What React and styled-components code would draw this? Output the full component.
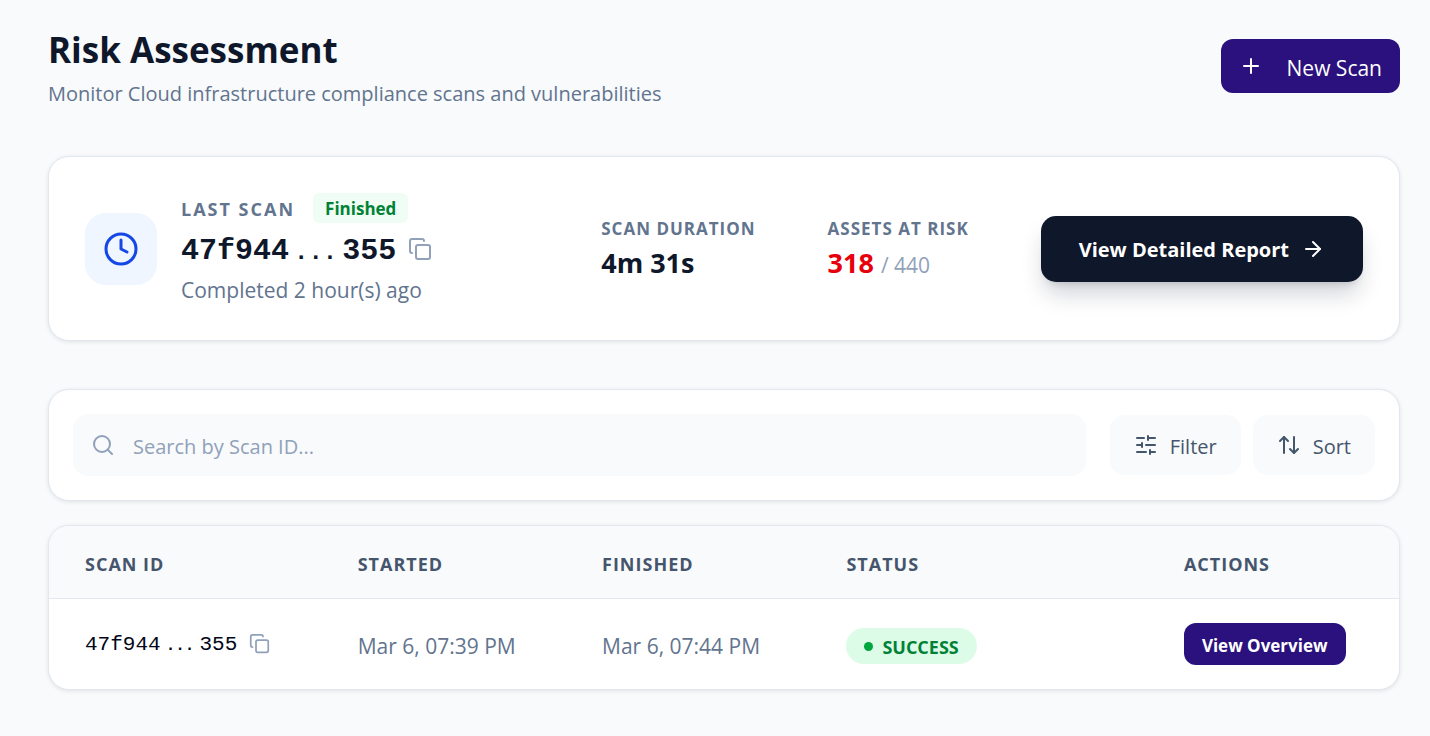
/* eslint-disable react/prop-types */
import React from "react";
import styled, { createGlobalStyle } from "styled-components";
import {
  ArrowRight,
  ArrowUpDown,
  Clock,
  Copy,
  Plus,
  Search,
  SlidersHorizontal,
} from "lucide-react";

const GlobalStyle = createGlobalStyle`
  :root {
    --navy: #0f172b;
    --indigo: #2a117d;
    --slate: #62748e;
    --slate-dark: #45556c;
    --slate-light: #90a1b9;
    --border: #e2e8f0;
    --soft: #f8fafc;
    --green: #008236;
  }

  * {
    box-sizing: border-box;
  }

  body {
    margin: 0;
    background: var(--soft);
    color: var(--navy);
    font-family: "Open Sans", "Noto Sans", sans-serif;
    font-size: 20px;
    line-height: 30px;
  }

  button,
  input {
    font: inherit;
  }

  button {
    border: 0;
    cursor: pointer;
    white-space: nowrap;
  }
`;

const Page = styled.main`
  display: flex;
  flex-direction: column;
  padding: 24px 30px 46px 48px;
`;

const Header = styled.header`
  display: flex;
  align-items: center;
  justify-content: space-between;
  margin-bottom: 48px;
`;

const Title = styled.h1`
  margin: 0;
  font-size: 35px;
  font-weight: 700;
  line-height: 52px;
`;

const Subtitle = styled.p`
  margin: 4px 0 0;
  color: var(--slate);
  line-height: 28px;
`;

const NewScanButton = styled.button`
  display: flex;
  align-items: center;
  gap: 24px;
  height: 54px;
  padding: 0 18px;
  border-radius: 12px;
  background: var(--indigo);
  color: white;
  font-size: 21px;
`;

const ButtonText = styled.span`
  padding-top: 3px;
`;

const Card = styled.section`
  border: 1px solid var(--border);
  border-radius: 21px;
  background: white;
  box-shadow: 0 1px 4px rgba(0, 0, 0, 0.1);
`;

const LastScanCard = styled(Card)`
  display: flex;
  align-items: center;
  justify-content: space-between;
  margin-bottom: 48px;
  padding: 36px;
`;

const LastScan = styled.div`
  display: flex;
  align-items: center;
  gap: 24px;
  flex: 1;
`;

const ClockTile = styled.div`
  display: grid;
  place-items: center;
  width: 72px;
  height: 72px;
  border-radius: 21px;
  background: #eff6ff;
  color: #1447e6;
`;

const LabelRow = styled.div`
  display: flex;
  align-items: center;
  gap: 18px;
`;

const Label = styled.span`
  display: block;
  color: var(--slate);
  font-size: 17px;
  font-weight: 700;
  line-height: 28px;
  letter-spacing: 1px;
`;

const WideLabel = styled(Label)`
  padding-top: 2px;
  font-size: 18px;
  letter-spacing: 2px;
`;

const FinishedBadge = styled.span`
  padding: 2px 12px 0;
  border-radius: 6px;
  background: #f0fdf4;
  color: var(--green);
  font-size: 17px;
  font-weight: 700;
  line-height: 28px;
`;

const ScanIdRow = styled.div`
  display: flex;
  align-items: center;
  gap: 12px;
`;

const Code = styled.span`
  display: flex;
  align-items: baseline;
  padding-top: ${({ $large }) => ($large ? "6px" : "2px")};
  font-family: "Liberation Mono", monospace;
  font-size: ${({ $large }) => ($large ? "30px" : "21px")};
  font-weight: ${({ $large }) => ($large ? 700 : 400)};
  line-height: ${({ $large }) => ($large ? "45px" : "28px")};
`;

const Dots = styled.span`
  padding: 0 5px;
  font-size: ${({ $large }) => ($large ? "24px" : "16px")};
  font-weight: 700;
  line-height: 1;
`;

const CopyButton = styled.button`
  display: flex;
  padding: 0;
  background: none;
  color: var(--slate-light);
`;

const Completed = styled.p`
  margin: 0;
  padding-top: 2px;
  color: var(--slate);
  font-size: 21px;
  line-height: 28px;
`;

const Stats = styled.dl`
  display: flex;
  gap: 72px;
  margin: 0 72px 0 0;
  padding-top: 3px;
`;

const StatValue = styled.dd`
  margin: 0;
  font-size: 27px;
  font-weight: 700;
  line-height: 40px;
`;

const Risk = styled.span`
  color: #e7000b;
`;

const Total = styled.span`
  color: var(--slate-light);
  font-size: 21px;
  font-weight: 400;
`;

const ReportButton = styled.button`
  display: flex;
  align-items: center;
  gap: 12px;
  height: 66px;
  padding: 0 38px;
  border-radius: 15px;
  background: var(--navy);
  color: white;
  font-weight: 700;
  box-shadow: 0 15px 23px -4px rgba(15, 23, 43, 0.2),
    0 6px 9px -6px rgba(15, 23, 43, 0.2);
`;

const Toolbar = styled(Card)`
  display: flex;
  align-items: center;
  gap: 12px;
  margin-bottom: 24px;
  padding: 24px;
`;

const SearchBox = styled.label`
  display: flex;
  align-items: center;
  flex: 1;
  gap: 18px;
  height: 62px;
  margin-right: 12px;
  padding: 0 18px;
  border-radius: 15px;
  background: var(--soft);
  color: var(--slate-light);
`;

const SearchInput = styled.input`
  flex: 1;
  min-width: 0;
  padding: 3px 0 0;
  border: 0;
  outline: 0;
  background: none;
  color: var(--navy);

  &::placeholder {
    color: var(--slate-light);
    opacity: 1;
  }
`;

const ToolButton = styled.button`
  display: flex;
  align-items: center;
  gap: 12px;
  height: 60px;
  padding: 0 24px;
  border-radius: 15px;
  background: var(--soft);
  color: var(--slate-dark);
`;

const TableCard = styled(Card)`
  overflow: hidden;
`;

const Table = styled.table`
  width: 100%;
  border-collapse: collapse;
  table-layout: fixed;
`;

const Th = styled.th`
  width: ${({ $width }) => $width};
  height: 72px;
  padding: 4px 36px 0;
  border-bottom: 1px solid var(--border);
  background: var(--soft);
  color: var(--slate-dark);
  font-size: 18px;
  font-weight: 700;
  letter-spacing: 1px;
  text-align: left;
`;

const Td = styled.td`
  height: 91px;
  padding: 4px 36px 0;
  color: var(--slate);
  font-size: 21px;
  white-space: nowrap;
`;

const ControlCell = styled(Td)`
  padding-top: 0;
  color: #020618;
`;

const StatusPill = styled.span`
  display: flex;
  align-items: center;
  gap: 9px;
  width: fit-content;
  height: 36px;
  padding: 2px 18px 0;
  border-radius: 18px;
  background: #dcfce7;
  color: var(--green);
  font-size: 18px;
  font-weight: 700;

  &::before {
    content: "";
    width: 9px;
    height: 9px;
    border-radius: 50%;
    background: #00a63e;
  }
`;

const OverviewButton = styled.button`
  display: block;
  height: 42px;
  padding: 4px 18px 0;
  border-radius: 12px;
  background: var(--indigo);
  color: white;
  font-size: 17px;
  font-weight: 700;
`;

const columns = [
  { name: "SCAN ID", width: "20.2%" },
  { name: "STARTED", width: "18.1%" },
  { name: "FINISHED", width: "18.1%" },
  { name: "STATUS", width: "25%" },
  { name: "ACTIONS", width: "18.6%" },
];

const scans = [
  {
    head: "47f944",
    tail: "355",
    started: "Mar 6, 07:39 PM",
    finished: "Mar 6, 07:44 PM",
    status: "SUCCESS",
  },
];

const ScanId = ({ head, tail, large }) => (
  <ScanIdRow>
    <Code $large={large}>
      {head}
      <Dots $large={large}>...</Dots>
      {tail}
    </Code>
    <CopyButton type="button" aria-label="Copy scan ID">
      <Copy size={large ? 24 : 21} />
    </CopyButton>
  </ScanIdRow>
);

const App = () => {
  return (
    <>
      <GlobalStyle />
      <Page>
        <Header>
          <div>
            <Title>Risk Assessment</Title>
            <Subtitle>
              Monitor Cloud infrastructure compliance scans and vulnerabilities
            </Subtitle>
          </div>
          <NewScanButton type="button">
            <Plus size={24} />
            <ButtonText>New Scan</ButtonText>
          </NewScanButton>
        </Header>

        <LastScanCard>
          <LastScan>
            <ClockTile>
              <Clock size={36} />
            </ClockTile>
            <div>
              <LabelRow>
                <WideLabel>LAST SCAN</WideLabel>
                <FinishedBadge>Finished</FinishedBadge>
              </LabelRow>
              <ScanId head="47f944" tail="355" large />
              <Completed>Completed 2 hour(s) ago</Completed>
            </div>
          </LastScan>
          <Stats>
            <div>
              <Label as="dt">SCAN DURATION</Label>
              <StatValue>4m 31s</StatValue>
            </div>
            <div>
              <Label as="dt">ASSETS AT RISK</Label>
              <StatValue>
                <Risk>318</Risk> <Total>/ 440</Total>
              </StatValue>
            </div>
          </Stats>
          <ReportButton type="button">
            <ButtonText>View Detailed Report</ButtonText>
            <ArrowRight size={24} />
          </ReportButton>
        </LastScanCard>

        <Toolbar>
          <SearchBox>
            <Search size={24} />
            <SearchInput
              type="text"
              aria-label="Search by Scan ID"
              placeholder="Search by Scan ID..."
            />
          </SearchBox>
          <ToolButton type="button">
            <SlidersHorizontal size={24} />
            <ButtonText>Filter</ButtonText>
          </ToolButton>
          <ToolButton type="button">
            <ArrowUpDown size={24} />
            <ButtonText>Sort</ButtonText>
          </ToolButton>
        </Toolbar>

        <TableCard>
          <Table>
            <thead>
              <tr>
                {columns.map(({ name, width }) => (
                  <Th key={name} $width={width} scope="col">
                    {name}
                  </Th>
                ))}
              </tr>
            </thead>
            <tbody>
              {scans.map((scan) => (
                <tr key={scan.started}>
                  <ControlCell>
                    <ScanId head={scan.head} tail={scan.tail} />
                  </ControlCell>
                  <Td>{scan.started}</Td>
                  <Td>{scan.finished}</Td>
                  <Td>
                    <StatusPill>{scan.status}</StatusPill>
                  </Td>
                  <ControlCell>
                    <OverviewButton type="button">View Overview</OverviewButton>
                  </ControlCell>
                </tr>
              ))}
            </tbody>
          </Table>
        </TableCard>
      </Page>
    </>
  );
};

export default App;
